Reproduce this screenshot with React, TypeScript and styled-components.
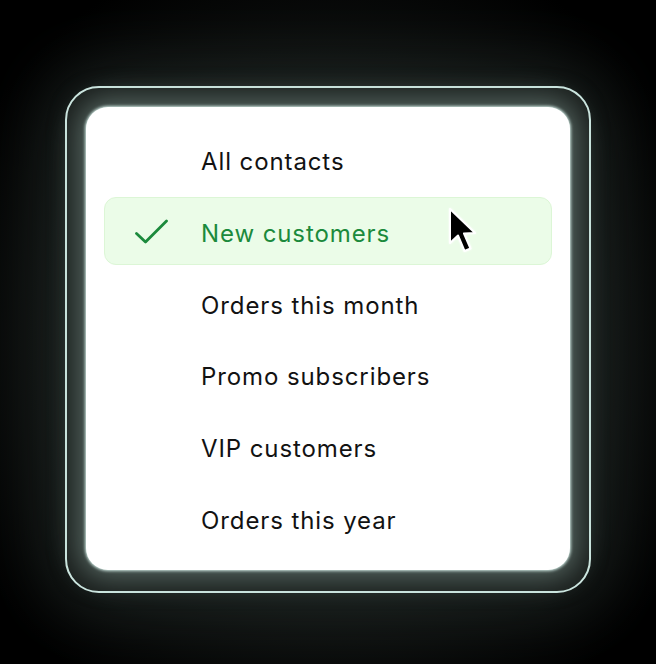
import React from "react";
import styled, { createGlobalStyle } from "styled-components";

const Global = createGlobalStyle`
  html, body { margin: 0; padding: 0; background: #000; }
  body { font-family: Inter, "Noto Sans", sans-serif; }
`;

const Page = styled.div`
  width: 656px;
  height: 664px;
  box-sizing: border-box;
  padding: 86px 65px 0;
  background: radial-gradient(ellipse 64% 64% at 50% 52%, #222725 0%, #121514 55%, #000 100%);
  overflow: hidden;
`;

const Frame = styled.div`
  width: 526px;
  height: 507px;
  box-sizing: border-box;
  border: 2px solid #cfe9e3;
  border-radius: 34px;
  padding: 19px;
  background: #1a1f1d;
  box-shadow: 0 0 70px 14px rgba(60, 75, 70, 0.38);
`;

const Card = styled.div`
  width: 484px;
  height: 463px;
  box-sizing: border-box;
  background: #fff;
  border-radius: 22px;
  padding: 18px;
  display: flex;
  flex-direction: column;
  gap: 4px;
  box-shadow: 0 0 3px 1px rgba(220, 245, 238, 0.9), 0 0 28px 8px rgba(140, 165, 158, 0.55);
`;

const Row = styled.div<{ $active?: boolean }>`
  position: relative;
  height: 68px;
  box-sizing: border-box;
  display: flex;
  align-items: center;
  border-radius: 12px;
  border: 1px solid ${(p) => (p.$active ? "#dcf6d6" : "transparent")};
  background: ${(p) => (p.$active ? "#ebfce8" : "transparent")};
`;

const CheckSlot = styled.div`
  width: 34px;
  height: 34px;
  margin-left: 29px;
  display: flex;
  align-items: center;
  justify-content: center;
  color: #1b8a3c;
`;

const Label = styled.span<{ $active?: boolean }>`
  margin-left: 33px;
  padding-top: 6px;
  font-size: 24px;
  line-height: 1;
  letter-spacing: 0.9px;
  color: ${(p) => (p.$active ? "#1b8a3c" : "#121212")};
`;

const Cursor = styled.svg`
  position: absolute;
  left: 337px;
  top: 8px;
  width: 34px;
  height: 50px;
  filter: drop-shadow(0 0 1px rgba(255, 255, 255, 0.9));
`;

const items = [
  "All contacts",
  "New customers",
  "Orders this month",
  "Promo subscribers",
  "VIP customers",
  "Orders this year",
];

export default function App() {
  return (
    <>
      <Global />
      <Page>
        <Frame>
          <Card>
            {items.map((label, i) => {
              const active = i === 1;
              return (
                <Row key={label} $active={active}>
                  <CheckSlot>
                    {active && (
                      <svg width="34" height="34" viewBox="0 0 34 34" fill="none">
                        <path
                          d="M2.5 19.5 L11.5 28 L32.5 7"
                          stroke="currentColor"
                          strokeWidth="2.8"
                          strokeLinecap="round"
                          strokeLinejoin="round"
                        />
                      </svg>
                    )}
                  </CheckSlot>
                  <Label $active={active}>{label}</Label>
                  {active && (
                    <Cursor viewBox="0 0 34 50">
                      <path
                        d="M8 3 L8 37 L16 29.5 L22.5 45 L28.5 42.5 L22 27.5 L33 27 Z"
                        fill="#000"
                        stroke="#fff"
                        strokeWidth="2"
                        strokeLinejoin="round"
                      />
                    </Cursor>
                  )}
                </Row>
              );
            })}
          </Card>
        </Frame>
      </Page>
    </>
  );
}
